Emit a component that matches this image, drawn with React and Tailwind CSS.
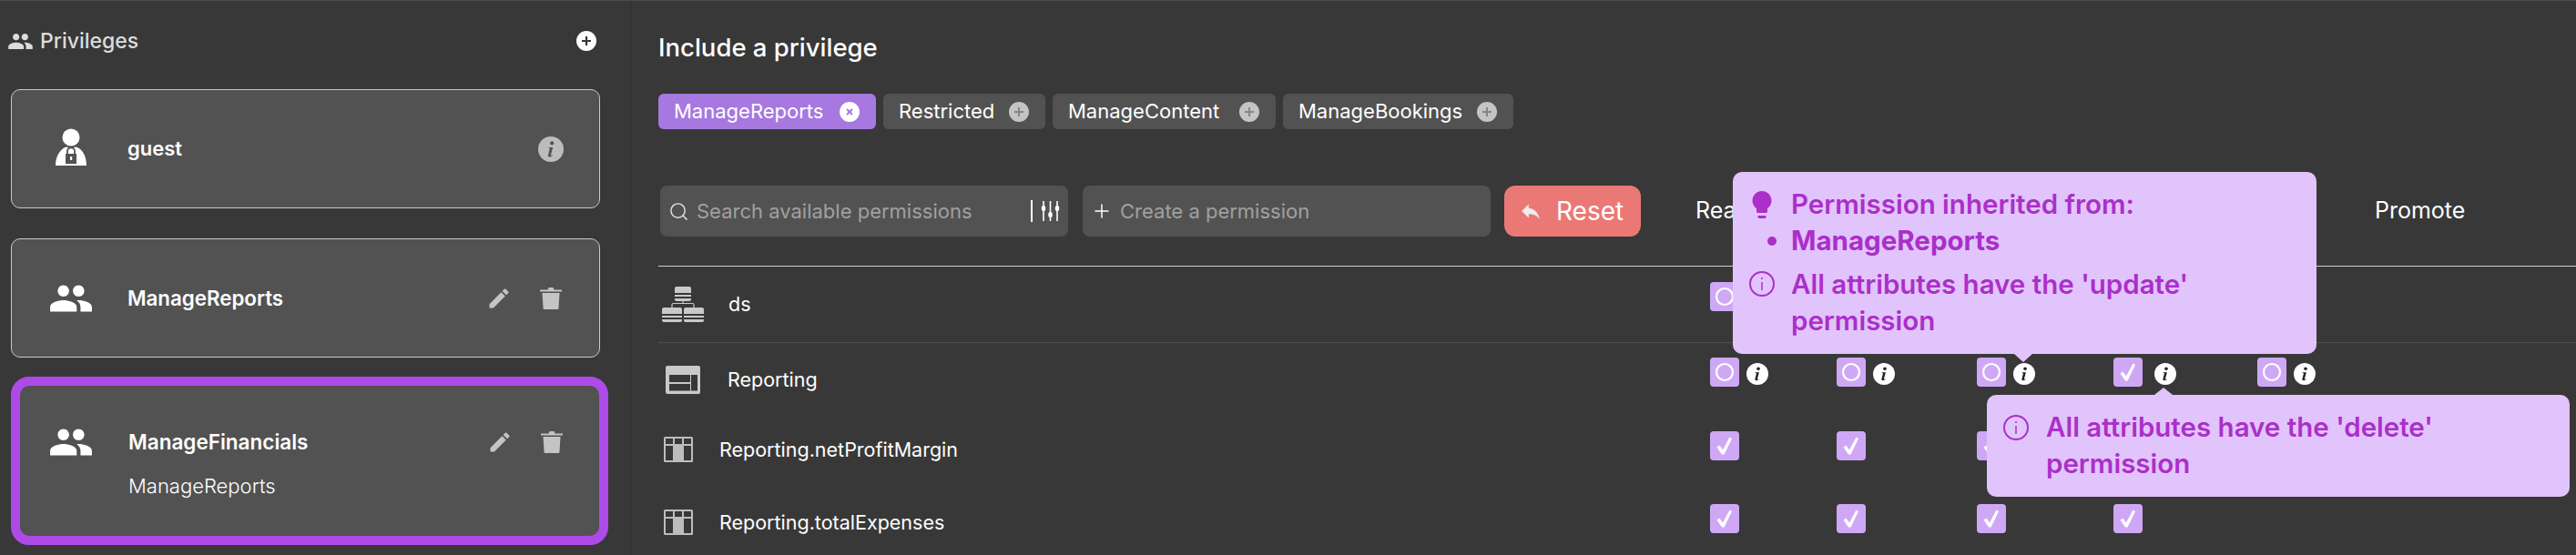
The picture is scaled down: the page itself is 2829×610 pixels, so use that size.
import { Plus, Search } from "lucide-react";

const PEOPLE = "M16 11c1.66 0 2.99-1.34 2.99-3S17.66 5 16 5c-1.66 0-3 1.34-3 3s1.34 3 3 3zm-8 0c1.66 0 2.99-1.34 2.99-3S9.66 5 8 5C6.34 5 5 6.34 5 8s1.34 3 3 3zm0 2c-2.33 0-7 1.17-7 3.5V19h14v-2.5c0-2.33-4.67-3.5-7-3.5zm8 0c-.29 0-.62.02-.97.05 1.16.84 1.97 1.97 1.97 3.45V19h6v-2.5c0-2.33-4.67-3.5-7-3.5z";

function People({ className }) {
  return (
    <svg viewBox="0 0 24 24" className={className} fill="currentColor">
      <path d={PEOPLE} />
    </svg>
  );
}

function GuestIcon() {
  return (
    <svg viewBox="0 0 50 50" className="w-[50px] h-[50px] text-white" fill="currentColor">
      <circle cx="25" cy="12" r="9.5" />
      <path d="M8 43c0-11 6-19 12-20.500 3 1.500 7 1.500 10 0C37 24 42 32 42 43z" />
      <path d="M19 30h12v11H19z" fill="#525252" />
      <path d="M21 30v-2.500c0-5.500 8-5.500 8 0V30" fill="none" stroke="#525252" strokeWidth="1.800" />
      <rect x="24" y="33" width="2.200" height="4" fill="#fff" />
    </svg>
  );
}

function Pencil() {
  return (
    <svg viewBox="0 0 24 24" className="w-[28px] h-[28px] text-[#c4c4c4]" fill="currentColor">
      <path d="M3 17.250V21h3.750L17.810 9.940l-3.750-3.750L3 17.250zM20.710 7.040c.39-.39.39-1.020 0-1.410l-2.340-2.340c-.39-.39-1.020-.39-1.410 0l-1.830 1.830 3.750 3.750 1.830-1.830z" />
    </svg>
  );
}

function Trash() {
  return (
    <svg viewBox="0 0 24 24" className="w-[24px] h-[24px] text-[#c4c4c4]" fill="currentColor">
      <path d="M8.500 2.500 9.500 0h5l1 2.500H24v2H0v-2z" />
      <path d="M2.500 6h19l-1 16.500c-.1 1-.8 1.500-1.500 1.500H5c-.8 0-1.400-.5-1.500-1.500z" />
    </svg>
  );
}

function InfoGlyph({ className, circle, mark }) {
  return (
    <svg viewBox="0 0 24 24" className={className}>
      <circle cx="12" cy="12" r="12" fill={circle} />
      <circle cx="13" cy="6.300" r="1.800" fill={mark} />
      <path d="M9.800 10.300h4.100l-2 7.200c-.1.500.3.600 1.500 0l.3.600c-1.600 1.300-4.900 1.800-4.300-.6l1.500-5.800c.1-.6-.3-.8-1.300-.8z" fill={mark} />
    </svg>
  );
}

function OutlineInfo() {
  return (
    <svg viewBox="0 0 28 28" className="w-[28px] h-[28px] shrink-0" fill="none" stroke="currentColor" strokeWidth="2">
      <circle cx="14" cy="14" r="13" />
      <path d="M14 12v9" strokeWidth="1.500" />
      <circle cx="14" cy="8" r="1" fill="currentColor" stroke="none" />
    </svg>
  );
}

function Bulb() {
  return (
    <svg viewBox="0 0 24 24" className="w-[36px] h-[36px] shrink-0" fill="currentColor">
      <path d="M9 21c0 .55.45 1 1 1h4c.55 0 1-.45 1-1v-1H9v1zm3-19C8.140 2 5 5.140 5 9c0 2.380 1.190 4.470 3 5.740V17c0 .55.45 1 1 1h6c.55 0 1-.45 1-1v-2.260c1.810-1.270 3-3.360 3-5.740 0-3.860-3.140-7-7-7z" />
    </svg>
  );
}

function Sliders() {
  return (
    <svg viewBox="0 0 21 22" className="w-[21px] h-[22px] text-white" fill="none" stroke="currentColor" strokeWidth="1.600">
      <path d="M3 0v22M10.500 0v22M18 0v22" />
      <rect x="0.800" y="5" width="4.400" height="6" rx="2" fill="currentColor" stroke="none" />
      <rect x="8.300" y="12" width="4.400" height="6" rx="2" fill="currentColor" stroke="none" />
      <rect x="15.800" y="5" width="4.400" height="6" rx="2" fill="currentColor" stroke="none" />
    </svg>
  );
}

function SchemaIcon() {
  return (
    <svg viewBox="0 0 46 39" className="w-[46px] h-[39px] text-[#c9c9c9]" fill="currentColor">
      <path d="M14 2a2 2 0 0 1 2-2h14a2 2 0 0 1 2 2v5H14zM14 9h18v2H14zM14 13h18v1a2 2 0 0 1-2 2H16a2 2 0 0 1-2-2z" />
      <path d="M0 25a2 2 0 0 1 2-2h18a2 2 0 0 1 2 2v5H0zM0 32h22v2H0zM0 36h22v1a2 2 0 0 1-2 2H2a2 2 0 0 1-2-2z" />
      <path d="M24 25a2 2 0 0 1 2-2h18a2 2 0 0 1 2 2v5H24zM24 32h22v2H24zM24 36h22v1a2 2 0 0 1-2 2H26a2 2 0 0 1-2-2z" />
      <path d="M11 23v-3a1.500 1.500 0 0 1 1.500-1.500h21A1.500 1.500 0 0 1 35 20v3M23 16v3" fill="none" stroke="currentColor" strokeWidth="1.200" />
    </svg>
  );
}

function TableIcon() {
  return (
    <svg viewBox="0 0 38 31" className="w-[38px] h-[31px]">
      <rect width="38" height="31" rx="2" fill="#c9c9c9" />
      <path d="M4 10h23v8H4zM4 20h23v7.500H4zM28 10h7v17.500h-7z" fill="#383838" />
    </svg>
  );
}

function ColumnIcon() {
  return (
    <svg viewBox="0 0 32 28" className="w-[32px] h-[28px]">
      <rect width="32" height="28" rx="1.500" fill="#bdbdbd" />
      <path d="M2 2h8v6H2zM12 2h8v6h-8zM22 2h8v6h-8zM2 10h8v16H2zM22 10h8v16h-8z" fill="#383838" />
    </svg>
  );
}

function CheckBox({ checked }) {
  return (
    <span className="w-[32px] h-[32px] rounded-[4px] bg-[#cfa8f5] shrink-0 flex items-center justify-center">
      <svg viewBox="0 0 32 32" className="w-[32px] h-[32px]">
        {checked ? (
          <path d="M7.500 17.500 10.500 15.500 14 20.500 21.500 6.500 24 8 15.500 25.500H13z" fill="#fff" />
        ) : (
          <circle cx="16" cy="16" r="9" fill="none" stroke="#fff" strokeWidth="2.200" />
        )}
      </svg>
    </span>
  );
}

function Chip({ label, active, className }) {
  return (
    <div className={`h-[39px] rounded-[6px] flex items-center justify-between pl-[17px] pr-[18px] text-white text-[22px] ${active ? "bg-[#a678e0]" : "bg-[#525252]"} ${className}`}>
      <span>{label}</span>
      <span className={`w-[22px] h-[22px] rounded-full flex items-center justify-center ${active ? "bg-white" : "bg-[#c4c4c4]"}`}>
        <svg viewBox="0 0 12 12" className="w-[12px] h-[12px]" fill="none" strokeWidth="2" stroke={active ? "#a678e0" : "#858585"}>
          {active ? <path d="M3 3l6 6M9 3l-6 6" /> : <path d="M6 1v10M1 6h10" />}
        </svg>
      </span>
    </div>
  );
}

/* columns start at the checkbox positions */
const ROW_GRID = "grid grid-cols-[1155px_139px_154px_150px_158px_1fr] items-start";

function PermCell({ checked, info }) {
  return (
    <div className="flex items-start">
      <CheckBox checked={checked} />
      {info && (
        <span className={`mt-[6px] ${info === "wide" ? "ml-[13px]" : "ml-[8px]"}`}>
          <InfoGlyph className="w-[24px] h-[24px]" circle="#fff" mark="#222" />
        </span>
      )}
    </div>
  );
}

function Tooltip({ className, children, arrow }) {
  return (
    <div className={`absolute z-10 bg-[#e1c4fb] rounded-[10px] text-[#ab2fc9] text-[29.500px] font-semibold leading-[40px] ${className}`}>
      {arrow}
      {children}
    </div>
  );
}

export default function App() {
  return (
    <div className="relative w-full h-[610px] overflow-hidden flex bg-[#383838] border-t border-[#4b4b4b] font-['Inter','Liberation_Sans',sans-serif]">
      {/* Sidebar */}
      <aside className="w-[693px] shrink-0 border-r border-[#2e2e2e] pl-[12px]">
        <div className="h-[88px] mb-[9px] flex items-center pr-[37px] -ml-[4px] text-[#dcdcdc]">
          <People className="w-[29px] h-[29px] mr-[7px] text-[#dcdcdc]" />
          <span className="text-[23px] font-medium">Privileges</span>
          <span className="ml-auto w-[22px] h-[22px] rounded-full bg-white flex items-center justify-center">
            <svg viewBox="0 0 12 12" className="w-[12px] h-[12px]" fill="none" stroke="#383838" strokeWidth="2.200">
              <path d="M6 1v10M1 6h10" />
            </svg>
          </span>
        </div>

        <div className="w-[647px] h-[131px] rounded-[10px] border border-[#c9c9c9] bg-[#525252] flex items-center pl-[40px] pr-[39px]">
          <GuestIcon />
          <span className="ml-[37px] text-white text-[22px] font-semibold">guest</span>
          <span className="ml-auto">
            <InfoGlyph className="w-[28px] h-[28px]" circle="#bcbcbc" mark="#525252" />
          </span>
        </div>

        <div className="mt-[33px] w-[647px] h-[131px] rounded-[10px] border border-[#c9c9c9] bg-[#525252] flex items-center pl-[40px] pr-[41px]">
          <People className="w-[50px] h-[50px] text-white" />
          <span className="ml-[37px] text-white text-[22.300px] font-semibold">ManageReports</span>
          <span className="ml-auto flex items-center gap-[31px]">
            <Pencil />
            <Trash />
          </span>
        </div>

        <div className="mt-[21px] w-[656px] h-[185px] rounded-[20px] border-[10px] border-[#ae4be8] bg-[#525252] flex flex-col justify-center pl-[31px] pr-[40px]">
          <div className="flex items-center">
            <People className="w-[50px] h-[50px] text-white" />
            <span className="ml-[38px] text-white text-[22.500px] font-semibold">ManageFinancials</span>
            <span className="ml-auto flex items-center gap-[31px]">
              <Pencil />
              <Trash />
            </span>
          </div>
          <div className="ml-[88px] mt-[7px] mb-[1px] text-white text-[22px] font-light">ManageReports</div>
        </div>
      </aside>

      {/* Main panel */}
      <main className="flex-1 pl-[30px]">
        <h1 className="pt-[34px] text-white text-[27.500px] font-medium leading-[34px]">Include a privilege</h1>

        <div className="mt-[34px] flex gap-[8px]">
          <Chip label="ManageReports" active className="w-[239px]" />
          <Chip label="Restricted" className="w-[178px]" />
          <Chip label="ManageContent" className="w-[245px]" />
          <Chip label="ManageBookings" className="w-[253px]" />
        </div>

        <div className="mt-[62px] pb-[32px] border-b border-[#cfcfcf] flex items-center">
          <div className="ml-[2px] w-[448px] h-[56px] rounded-[8px] bg-[#525252] flex items-center pl-[9px] pr-[9px]">
            <Search className="w-[23px] h-[23px] text-[#e0e0e0]" strokeWidth={1.500} />
            <span className="ml-[8px] text-[22px] text-[#a0a0a0]">Search available permissions</span>
            <span className="ml-auto h-[24px] w-[2px] bg-white mr-[9px]" />
            <Sliders />
          </div>
          <div className="ml-[16px] w-[448px] h-[56px] rounded-[8px] bg-[#525252] flex items-center pl-[9px]">
            <Plus className="w-[24px] h-[24px] text-white" strokeWidth={1.500} />
            <span className="ml-[8px] text-[22px] text-[#a0a0a0]">Create a permission</span>
          </div>
          <button className="ml-[15px] w-[150px] h-[56px] rounded-[12px] bg-[#ea7976] flex items-center pl-[16px] text-white">
            <svg viewBox="0 0 24 24" className="w-[26px] h-[26px] text-[#eeeeee]" fill="currentColor">
              <path d="M10 9V5l-7 7 7 7v-4.100c5 0 8.500 1.600 11 5.100-1-5-4-10-11-11z" />
            </svg>
            <span className="ml-[15px] text-[28px]">Reset</span>
          </button>
          <span className="ml-[60px] w-[746px] text-white text-[25px]">Read</span>
          <span className="text-white text-[25px]">Promote</span>
        </div>

        <div className={`${ROW_GRID} h-[84px] pt-[17px] border-b border-[#4f4f4f]`}>
          <div className="h-[48px] flex items-center pl-[4px] text-white text-[21.500px]">
            <SchemaIcon />
            <span className="ml-[27px]">ds</span>
          </div>
          <PermCell />
        </div>

        <div className={`${ROW_GRID} h-[80px] pt-[16px]`}>
          <div className="h-[48px] flex items-center pl-[8px] text-white text-[21.500px]">
            <TableIcon />
            <span className="ml-[30px]">Reporting</span>
          </div>
          <PermCell info />
          <PermCell info />
          <PermCell info />
          <PermCell checked info="wide" />
          <PermCell info />
        </div>

        {["Reporting.netProfitMargin", "Reporting.totalExpenses"].map((name) => (
          <div key={name} className={`${ROW_GRID} h-[80px] pt-[17px]`}>
            <div className="h-[40px] flex items-center pl-[6px] text-white text-[21.500px]">
              <ColumnIcon />
              <span className="ml-[29px]">{name}</span>
            </div>
            <PermCell checked />
            <PermCell checked />
            <PermCell checked />
            <PermCell checked />
          </div>
        ))}
      </main>

      {/* Tooltips */}
      <Tooltip
        className="left-[1903px] top-[188px] w-[641px] h-[200px] pt-[15px] pl-[64px]"
        arrow={
          <span className="absolute left-[309px] top-[200px] w-0 h-0 border-x-[10px] border-x-transparent border-t-[9px] border-t-[#e1c4fb]" />
        }
      >
        <span className="absolute left-[14px] top-[18px]"><Bulb /></span>
        <p>Permission inherited from:</p>
        <p className="relative font-bold">
          <span className="absolute left-[-26px] top-[16px] w-[10px] h-[10px] rounded-full bg-[#ab2fc9]" />
          ManageReports
        </p>
        <p className="relative mt-[8px]">
          <span className="absolute left-[-46px] top-[6px]"><OutlineInfo /></span>
          All attributes have the 'update' permission
        </p>
      </Tooltip>

      <Tooltip
        className="left-[2182px] top-[433px] w-[640px] h-[112px] pt-[15px] pl-[65px] pr-[140px]"
        arrow={
          <span className="absolute left-[184px] top-[-8px] w-0 h-0 border-x-[10px] border-x-transparent border-b-[8px] border-b-[#e1c4fb]" />
        }
      >
        <span className="absolute left-[18px] top-[22px]"><OutlineInfo /></span>
        <p>All attributes have the 'delete' permission</p>
      </Tooltip>
    </div>
  );
}
